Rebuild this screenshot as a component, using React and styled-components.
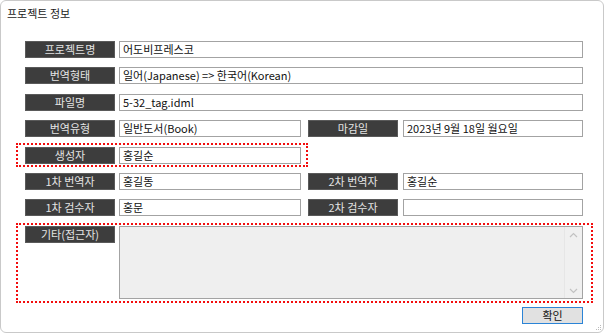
import React from 'react';
import styled, { createGlobalStyle } from 'styled-components';

const GlobalStyle = createGlobalStyle`
  html, body {
    margin: 0;
    padding: 0;
    background: #ffffff;
  }
  body {
    font-family: 'Noto Sans CJK KR', 'Noto Sans', sans-serif;
    font-size: 11px;
    color: #111;
  }
`;

const Window = styled.div`
  position: relative;
  box-sizing: border-box;
  width: 604px;
  height: 333px;
  border: 1px solid #c9c9c9;
  border-radius: 6px;
  background: #fff;
`;

const Title = styled.div`
  padding: 5px 0 0 6px;
  height: 15px;
  line-height: 15px;
  font-size: 11px;
  color: #1a1a1a;
`;

const Form = styled.div`
  display: grid;
  row-gap: 9.4px;
  width: 558px;
  margin: 20px 0 0 24px;
`;

const Row = styled.div`
  display: flex;
  align-items: flex-start;
  height: ${(p) => (p.$tall ? 'auto' : '17px')};
`;

// red dotted frame round a row, kept out of the flow by negative margins
const Highlight = styled.div`
  border: 2px dotted #f20d0d;
  margin: ${(p) => p.$margin};
  padding: ${(p) => p.$padding};
`;

const Label = styled.div`
  flex: none;
  box-sizing: border-box;
  width: 90px;
  height: 17px;
  margin-left: ${(p) => p.$ml || 0}px;
  background: #3d3d3d;
  border: 1px solid #5a5a5a;
  color: #e4e4e4;
  font-size: 11px;
  line-height: 15px;
  text-align: center;
  white-space: nowrap;
`;

const Field = styled.div`
  box-sizing: border-box;
  flex: ${(p) => (p.$w ? 'none' : '1')};
  width: ${(p) => (p.$w ? `${p.$w}px` : 'auto')};
  height: 17px;
  margin-left: ${(p) => p.$ml || 4}px;
  padding: 0 3px;
  background: #fff;
  border: 1px solid #a3a3a3;
  color: #111;
  font-size: 11px;
  line-height: 15px;
  white-space: nowrap;
  overflow: hidden;
`;

const Memo = styled.div`
  box-sizing: border-box;
  flex: 1;
  height: 73px;
  margin-left: 4px;
  display: flex;
  justify-content: flex-end;
  background: #efefef;
  border: 1px solid #a3a3a3;
`;

const ScrollBar = styled.div`
  width: 17px;
  display: flex;
  flex-direction: column;
  justify-content: space-between;
  align-items: center;
  padding: 5px 0 4px;
  background: #f0f0f0;
  border-left: 1px solid #e6e6e6;
`;

const Footer = styled.div`
  display: flex;
  justify-content: flex-end;
  width: 558px;
  margin: 8px 0 0 24px;
`;

const Button = styled.button`
  box-sizing: border-box;
  width: 61px;
  height: 17px;
  padding: 0;
  background: #e1e1e1;
  border: 1px solid #2b84d6;
  color: #111;
  font-family: inherit;
  font-size: 11px;
  line-height: 14px;
`;

const Grip = styled.svg`
  position: absolute;
  right: 1px;
  bottom: 1px;
`;

const Chevron = ({ up }) => (
  <svg width="9" height="6" viewBox="0 0 9 6">
    <path
      d={up ? 'M1 5 L4.5 1.5 L8 5' : 'M1 1 L4.5 4.5 L8 1'}
      fill="none"
      stroke="#c2c2c2"
      strokeWidth="1.2"
    />
  </svg>
);

const App = () => {
  return (
    <>
      <GlobalStyle />
      <Window>
        <Title>프로젝트 정보</Title>
        <Form>
          <Row>
            <Label>프로젝트명</Label>
            <Field>어도비프레스코</Field>
          </Row>
          <Row>
            <Label>번역형태</Label>
            <Field>일어(Japanese) =&gt; 한국어(Korean)</Field>
          </Row>
          <Row>
            <Label>파일명</Label>
            <Field>5-32_tag.idml</Field>
          </Row>
          <Row>
            <Label>번역유형</Label>
            <Field $w={182}>일반도서(Book)</Field>
            <Label $ml={7}>마감일</Label>
            <Field $ml={5}>2023년 9월 18일 월요일</Field>
          </Row>
          <Row>
            <Highlight $margin="-4px 0 -3px -9px" $padding="2px 5px 1px 7px">
              <Row>
                <Label>생성자</Label>
                <Field $w={182}>홍길순</Field>
              </Row>
            </Highlight>
          </Row>
          <Row>
            <Label>1차 번역자</Label>
            <Field $w={182}>홍길동</Field>
            <Label $ml={7}>2차 번역자</Label>
            <Field $ml={5}>홍길순</Field>
          </Row>
          <Row>
            <Label>1차 검수자</Label>
            <Field $w={182}>홍문</Field>
            <Label $ml={7}>2차 검수자</Label>
            <Field $ml={5}></Field>
          </Row>
          <Row $tall>
            <Highlight
              $margin="-3px -10px -4px -9px"
              $padding="1px 8px 2px 7px"
              style={{ flex: 1 }}
            >
              <Row $tall>
                <Label>기타(접근자)</Label>
                <Memo>
                  <ScrollBar>
                    <Chevron up />
                    <Chevron />
                  </ScrollBar>
                </Memo>
              </Row>
            </Highlight>
          </Row>
        </Form>
        <Footer>
          <Button>확인</Button>
        </Footer>
        <Grip width="6" height="6" viewBox="0 0 6 6">
          <rect x="4" y="0" width="1" height="1" fill="#bbb" />
          <rect x="2" y="2" width="1" height="1" fill="#bbb" />
          <rect x="4" y="2" width="1" height="1" fill="#bbb" />
          <rect x="0" y="4" width="1" height="1" fill="#bbb" />
          <rect x="2" y="4" width="1" height="1" fill="#bbb" />
          <rect x="4" y="4" width="1" height="1" fill="#bbb" />
        </Grip>
      </Window>
    </>
  );
};

export default App;
